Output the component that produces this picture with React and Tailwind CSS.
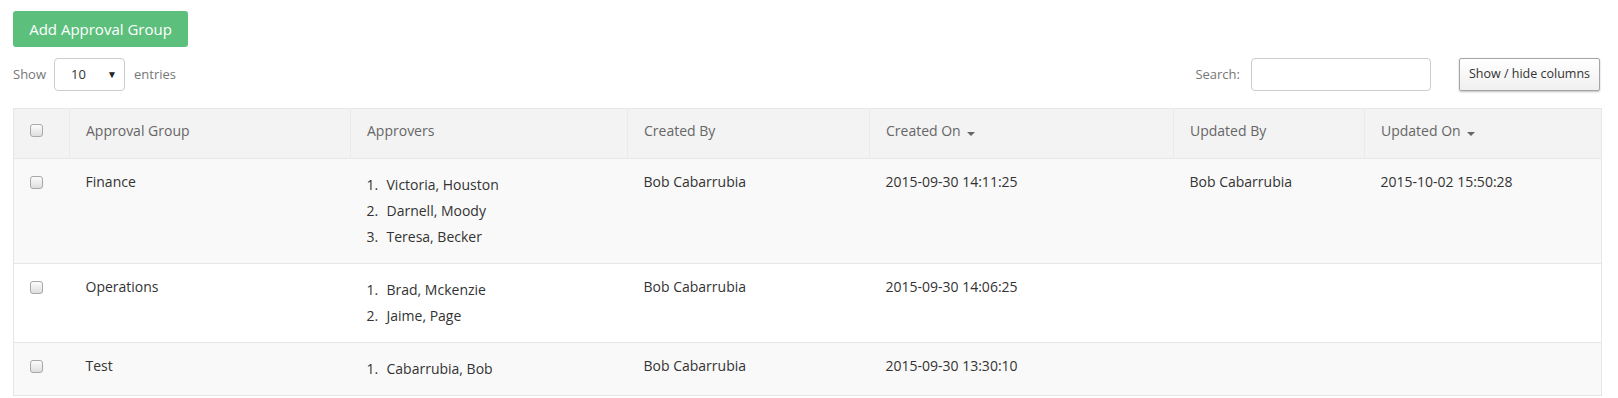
import { useState } from 'react'

const rows = [
  {
    group: 'Finance',
    approvers: ['Victoria, Houston', 'Darnell, Moody', 'Teresa, Becker'],
    createdBy: 'Bob Cabarrubia',
    createdOn: '2015-09-30 14:11:25',
    updatedBy: 'Bob Cabarrubia',
    updatedOn: '2015-10-02 15:50:28',
  },
  {
    group: 'Operations',
    approvers: ['Brad, Mckenzie', 'Jaime, Page'],
    createdBy: 'Bob Cabarrubia',
    createdOn: '2015-09-30 14:06:25',
    updatedBy: '',
    updatedOn: '',
  },
  {
    group: 'Test',
    approvers: ['Cabarrubia, Bob'],
    createdBy: 'Bob Cabarrubia',
    createdOn: '2015-09-30 13:30:10',
    updatedBy: '',
    updatedOn: '',
  },
]

const SortCaret = () => (
  <span className="relative top-[2px] ml-[6px] inline-block h-0 w-0 border-x-[4px] border-t-[4px] border-x-transparent border-t-[#666] align-middle" />
)

const Checkbox = () => (
  <span className="block h-[13px] w-[13px] rounded-[3px] border border-[#a8a8a8] bg-gradient-to-b from-[#fcfcfc] to-[#dedede]" />
)

const App = () => {
  const [search, setSearch] = useState('')

  return (
    <div className="min-h-screen bg-white pl-[13px] pr-[16px] pt-[11px] font-['Open_Sans',sans-serif] text-[14px] text-[#333]">
      <button className="h-[36px] w-[175px] rounded-[3px] bg-[#5cbf7c] text-[15px] text-white">
        Add Approval Group
      </button>

      {/* Controls */}
      <div className="mt-[11px] flex items-center justify-between pr-[2px]">
        <div className="flex items-center text-[13px] text-[#777]">
          <span>Show</span>
          <div className="ml-[8px] flex h-[33px] w-[71px] items-center justify-between rounded-[4px] border border-[#ccc] pl-[16px] pr-[7px] text-[13px] text-[#333]">
            <span>10</span>
            <span className="text-[10px] text-[#222]">▼</span>
          </div>
          <span className="ml-[9px]">entries</span>
        </div>
        <div className="flex items-center">
          <span className="text-[13px] text-[#777]">Search:</span>
          <input
            value={search}
            onChange={(e) => setSearch(e.target.value)}
            className="ml-[11px] h-[33px] w-[180px] rounded-[4px] border border-[#ccc] px-2 text-[13px] outline-none"
          />
          <button className="ml-[28px] h-[33px] w-[141px] rounded-[2px] border border-[#a5a5a5] bg-gradient-to-b from-white to-[#f0f0f0] text-[12.5px] text-[#333] shadow-[0_1px_2px_rgba(0,0,0,0.25)]">
            Show / hide columns
          </button>
        </div>
      </div>

      {/* Table */}
      <table className="mt-[17px] w-[1589px] table-fixed border-collapse border border-[#e6e6e6]">
        <colgroup>
          <col className="w-[56px]" />
          <col className="w-[281px]" />
          <col className="w-[277px]" />
          <col className="w-[242px]" />
          <col className="w-[304px]" />
          <col className="w-[191px]" />
          <col />
        </colgroup>
        <thead>
          <tr className="bg-[#f3f3f3] text-left text-[14px] font-normal leading-[20px] text-[#666]">
            <th className="pl-[16px] pt-[15px] pb-[16px] align-top font-normal">
              <Checkbox />
            </th>
            <th className="border-l border-[#ebebeb] px-4 pt-[12px] pb-[17px] font-normal">Approval Group</th>
            <th className="border-l border-[#ebebeb] px-4 pt-[12px] pb-[17px] font-normal">Approvers</th>
            <th className="border-l border-[#ebebeb] px-4 pt-[12px] pb-[17px] font-normal">Created By</th>
            <th className="border-l border-[#ebebeb] px-4 pt-[12px] pb-[17px] font-normal">
              Created On
              <SortCaret />
            </th>
            <th className="border-l border-[#ebebeb] px-4 pt-[12px] pb-[17px] font-normal">Updated By</th>
            <th className="border-l border-[#ebebeb] px-4 pt-[12px] pb-[17px] font-normal">
              Updated On
              <SortCaret />
            </th>
          </tr>
        </thead>
        <tbody>
          {rows.map((row, i) => (
            <tr
              key={row.group}
              className={`border-t border-[#e6e6e6] align-top leading-[20px] ${i % 2 === 0 ? 'bg-[#f9f9f9]' : 'bg-white'}`}
            >
              <td className="pl-[16px] pt-[17px]">
                <Checkbox />
              </td>
              <td className="px-4 pt-[13px] pb-[13px]">{row.group}</td>
              <td className="px-4 pt-[13px] pb-[13px]">
                <ol>
                  {row.approvers.map((name, n) => (
                    <li key={name} className="flex leading-[26px]">
                      <span className="w-[20px]">{n + 1}.</span>
                      <span>{name}</span>
                    </li>
                  ))}
                </ol>
              </td>
              <td className="px-4 pt-[13px] pb-[13px]">{row.createdBy}</td>
              <td className="px-4 pt-[13px] pb-[13px]">{row.createdOn}</td>
              <td className="px-4 pt-[13px] pb-[13px]">{row.updatedBy}</td>
              <td className="px-4 pt-[13px] pb-[13px]">{row.updatedOn}</td>
            </tr>
          ))}
        </tbody>
      </table>
    </div>
  )
}

export default App
